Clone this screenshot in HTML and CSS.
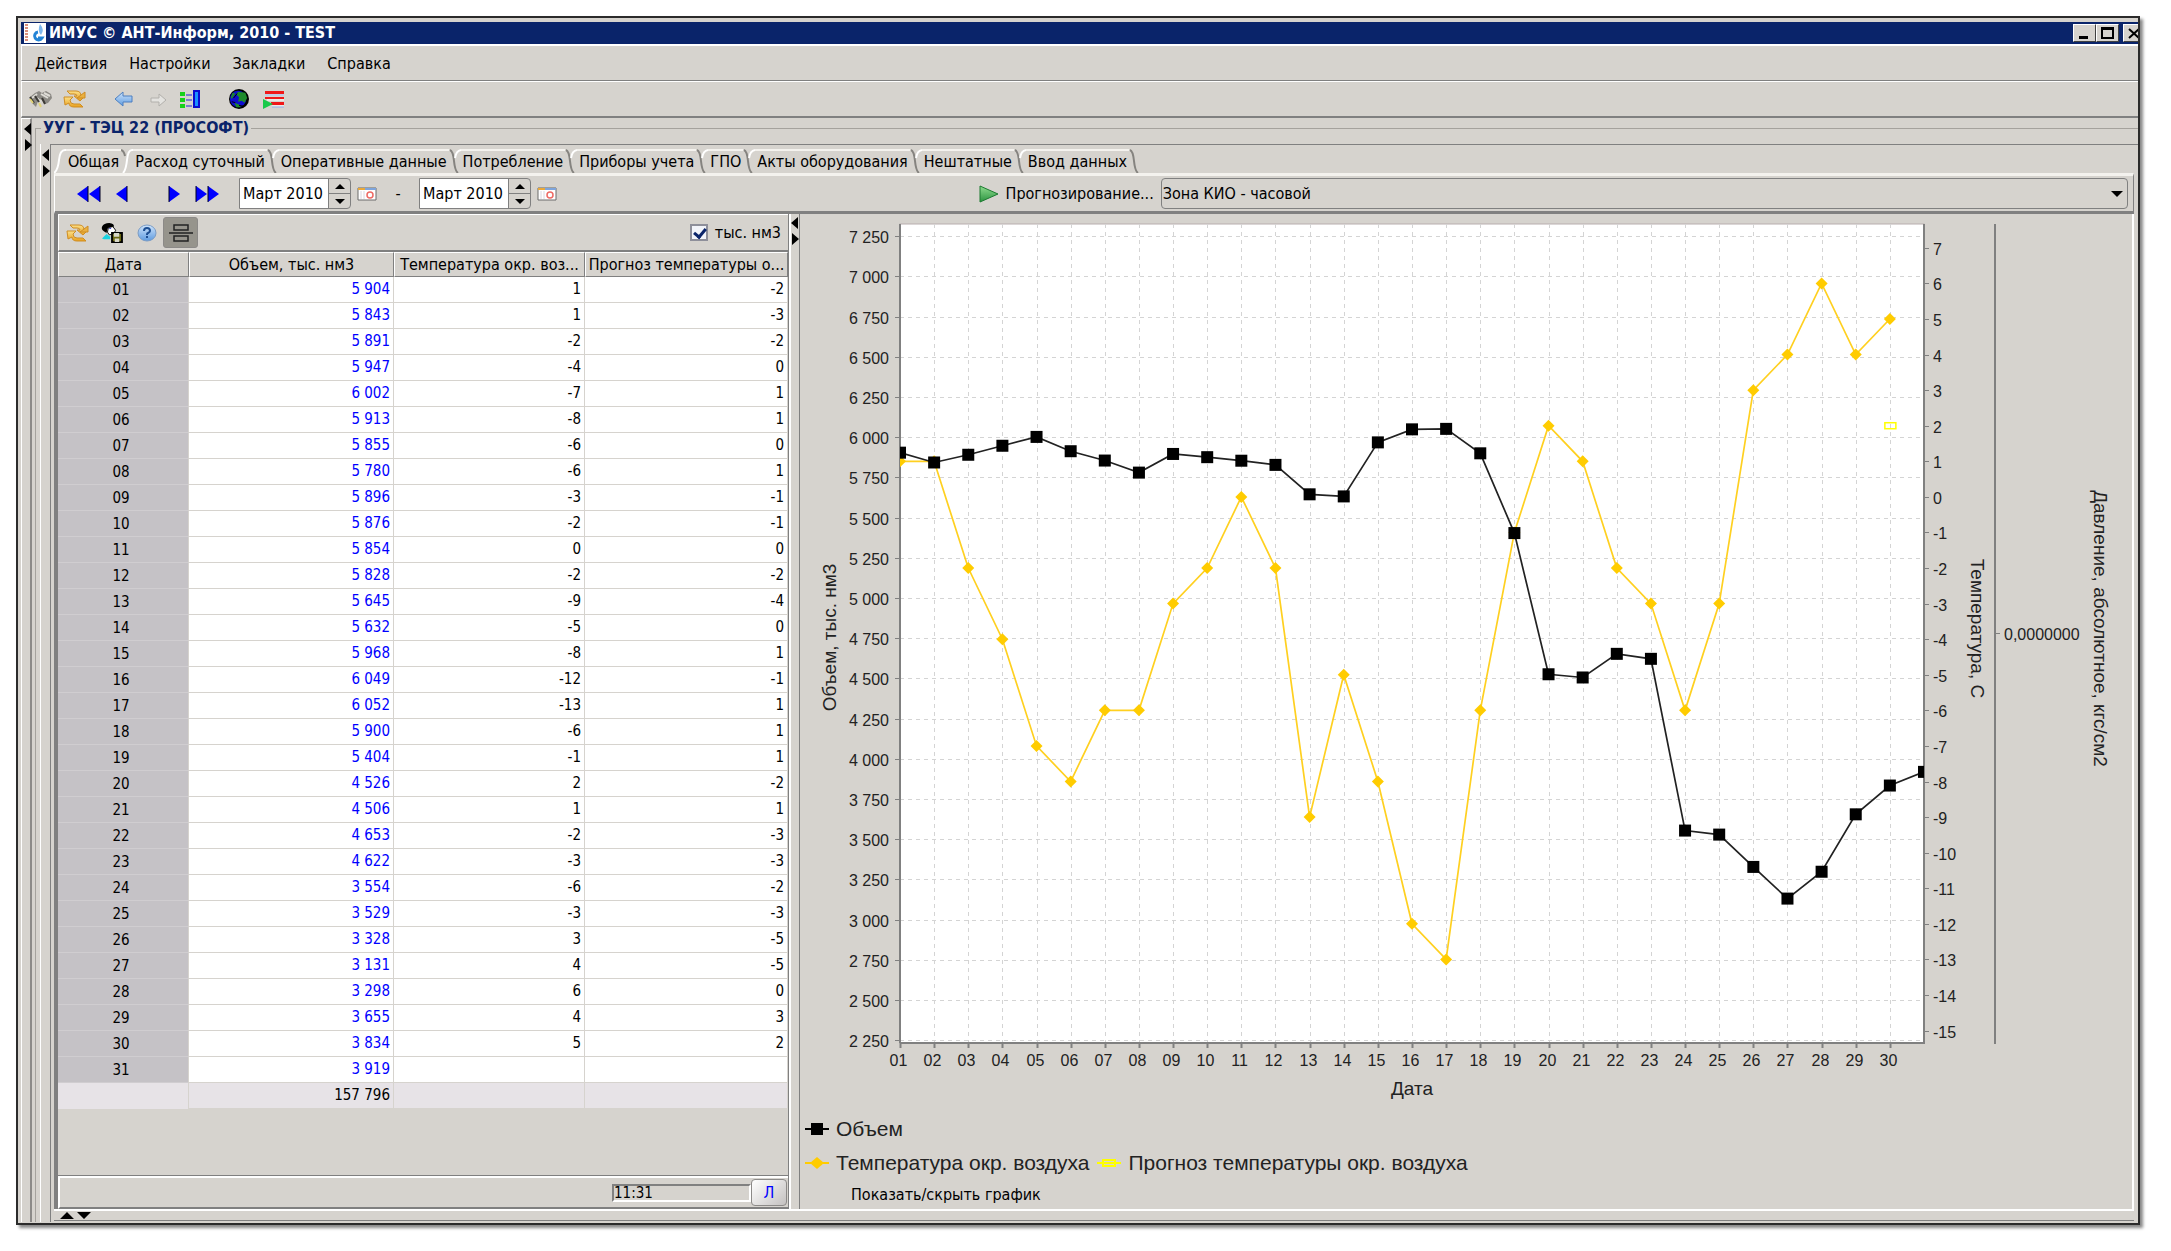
FILE: index.html
```html
<!DOCTYPE html>
<html lang="ru">
<head>
<meta charset="utf-8">
<title>ИМУС © АНТ-Информ, 2010 - TEST</title>
<link rel="stylesheet" href="styles.css">
</head>
<body>
<svg class="defs" width="0" height="0" aria-hidden="true">
  <defs>
    <linearGradient id="gold" x1="0" y1="0" x2="0" y2="1"><stop offset="0" stop-color="#fbe08a"/><stop offset="1" stop-color="#e9a01c"/></linearGradient>
    <linearGradient id="sky" x1="0" y1="0" x2="0" y2="1"><stop offset="0" stop-color="#cfe4fb"/><stop offset="1" stop-color="#5e9be0"/></linearGradient>
    <linearGradient id="leaf" x1="0" y1="0" x2="0" y2="1"><stop offset="0" stop-color="#8fdc8f"/><stop offset="1" stop-color="#2c9440"/></linearGradient>
    <symbol id="i-refresh" viewBox="0 0 24 18">
      <path d="M4 1h9q5 0 5 5h4l-5 5-6-5h3q0-2-3-2H7z" fill="url(#gold)" stroke="#cf8d23"/>
      <path d="M20 17h-9q-5 0-5-4l-4 2-1-8h9l-3 3q0 4 4 4h6z" fill="url(#gold)" stroke="#cf8d23"/>
      <path d="M14 8l8-6v6z" fill="#eab040" stroke="#cf8d23"/>
    </symbol>
    <symbol id="i-calendar" viewBox="0 0 20 14">
      <path d="M1 1h18v12H1z" fill="#fff" stroke="#6b6b6b"/>
      <path d="M1 1h7v2H1z" fill="#e9a93c"/><path d="M8 1h11v2H8z" fill="#7fa5dc"/>
      <path d="M4 4v8M7 4v8" stroke="#d8d8e0"/>
      <circle cx="13" cy="8" r="3" fill="#fff" stroke="#ee6a64" stroke-width="1.5"/>
    </symbol>
  </defs>
</svg>

<div class="window">
  <header class="titlebar">
    <svg class="app-icon" viewBox="0 0 22 20" aria-hidden="true">
      <path d="M0 0h22v20H0z" fill="#fff"/>
      <path d="M1 2h3M1 5h3M1 8h3M1 11h3M1 14h3M1 17h3" fill="none" stroke="#d9907c" stroke-width="2"/>
      <path d="M16 1q5 6 1 11-4-4-1-11z" fill="#7db7ec"/>
      <path d="M14 9a4 4 0 1 0 4 6h-4" fill="none" stroke="#2384d6" stroke-width="3"/>
    </svg>
    <h1 class="title">ИМУС © АНТ-Информ, 2010 - TEST</h1>
    <div class="win-buttons">
      <button class="win-btn" aria-label="Свернуть"><svg viewBox="0 0 20 16"><path d="M5 11h9v3H5z"/></svg></button>
      <button class="win-btn" aria-label="Развернуть"><svg viewBox="0 0 20 16"><path d="M4 2h13v12H4zM6 5v7h9V5z" fill-rule="evenodd"/></svg></button>
      <button class="win-btn close" aria-label="Закрыть"><svg viewBox="0 0 20 16"><path d="M5 4l10 9M15 4L5 13" stroke="#000" stroke-width="2"/></svg></button>
    </div>
  </header>

  <nav class="menubar">
    <button class="menu">Действия</button>
    <button class="menu">Настройки</button>
    <button class="menu">Закладки</button>
    <button class="menu">Справка</button>
  </nav>

  <div class="toolbar">
    <button class="tool" aria-label="Поиск"><svg class="i24" viewBox="0 0 24 20">
      <path d="M1 8l5-4 4-2 3 2 4-2 5 3 1 4-4 5-3 1-4-5-3 2-2 6-4-4z" fill="#8b8984"/>
      <path d="M3 9l5-4M12 5l7 4M8 9l4 4M15 4l6 3" stroke="#dedcd6" stroke-width="2"/>
      <path d="M1 8l4 6M6 7l4 6M13 9l3 6" stroke="#3c3a36" stroke-width="2"/>
      <path d="M10 14l2 4M1 10l3 4" stroke="#e3d478" stroke-width="2"/></svg></button>
    <button class="tool" aria-label="Обновить"><svg class="i24"><use href="#i-refresh"/></svg></button>
    <span class="tool-gap"></span>
    <button class="tool" aria-label="Назад"><svg class="i20" viewBox="0 0 20 18"><path d="M1 9l8-7v4h9v6H9v4z" fill="url(#sky)" stroke="#4c7fc0"/></svg></button>
    <button class="tool forward" aria-label="Вперёд"><svg class="i20" viewBox="0 0 20 18"><path d="M18 10l-7-6v4H3v4h8v4z" fill="#e4e3e0" stroke="#b2b0ac"/></svg></button>
    <button class="tool list" aria-label="Список"><svg class="i20" viewBox="0 0 20 18">
      <path d="M0 2h5v4H0zM0 8h5v4H0zM0 14h5v4H0z" fill="#17d01a"/><path d="M6 5h6M6 10h6M6 16h6" stroke="#2222d8" stroke-width="1"/><path d="M14 1h5v16h-5z" fill="#1a90ff" stroke="#0a0ad0" stroke-width="2"/></svg></button>
    <span class="tool-gap"></span>
    <button class="tool" aria-label="Сеть"><svg class="i24" viewBox="0 0 24 22">
      <ellipse cx="12" cy="11" rx="11" ry="11" fill="#000"/><ellipse cx="11" cy="11" rx="9" ry="9" fill="#0c0ccf"/>
      <path d="M11 3l8 1 2 6-3 5-3-2-4 1 1-5-3-3zM5 4l3 1-4 6-1-2zM7 15l5 2 2 3-5 0z" fill="#1d8a2c"/><path d="M4 14l4 1M12 18l5 1M10 5l-4 5" stroke="#000"/></svg></button>
    <button class="tool rows" aria-label="Выполнить"><svg class="i22" viewBox="0 0 22 18">
      <path d="M2 1h19v3H2zM2 7h19v2H2zM8 12h13v3H8z" fill="#f01818"/><path d="M2 5h19M4 10h17M9 16h12" stroke="#fff"/><path d="M2 5h19M9 17h12" stroke="#8fb0e8"/><path d="M0 9l10 5-10 5z" fill="#18c94a"/></svg></button>
  </div>

  <main class="main">
    <div class="splitter outer"><svg class="split-arrows" viewBox="0 0 8 28"><path d="M7 0v12L0 6zM1 16v12l7-6z"/></svg></div>
    <fieldset class="group">
      <legend>УУГ - ТЭЦ 22 (ПРОСОФТ)</legend>
      <div class="group-body">
        <div class="splitter inner"><svg class="split-arrows" viewBox="0 0 8 28"><path d="M7 0v12L0 6zM1 16v12l7-6z"/></svg></div>
        <div class="sheet">
          <div class="tabs" role="tablist">
            <svg class="edge" viewBox="0 0 12 24"><path d="M0 24q4-3 5-13t6-10h1" fill="none" stroke="#fff" stroke-width="2"/></svg>
            <button class="tab" role="tab">Общая</button>
            <svg class="edge" viewBox="0 0 12 24"><path d="M0 1q3 1 4 6" fill="none" stroke="#85837f" stroke-width="2"/><path d="M2 24q3-3 4-13t5-10h1" fill="none" stroke="#fff" stroke-width="2"/></svg>
            <button class="tab active" role="tab" aria-selected="true">Расход суточный</button>
            <svg class="edge"><use href="#slant"/></svg>
            <button class="tab" role="tab">Оперативные данные</button>
            <svg class="edge"><use href="#slant"/></svg>
            <button class="tab" role="tab">Потребление</button>
            <svg class="edge"><use href="#slant"/></svg>
            <button class="tab" role="tab">Приборы учета</button>
            <svg class="edge"><use href="#slant"/></svg>
            <button class="tab" role="tab">ГПО</button>
            <svg class="edge"><use href="#slant"/></svg>
            <button class="tab" role="tab">Акты оборудования</button>
            <svg class="edge"><use href="#slant"/></svg>
            <button class="tab" role="tab">Нештатные</button>
            <svg class="edge"><use href="#slant"/></svg>
            <button class="tab" role="tab">Ввод данных</button>
            <svg class="edge" viewBox="0 0 12 24"><symbol id="slant" viewBox="0 0 12 24"><path d="M1 1q3 1 4 11t4 12" fill="none" stroke="#85837f" stroke-width="2"/><path d="M6 9q1-7 6-8" fill="none" stroke="#fff" stroke-width="2"/></symbol><path d="M1 1q3 1 4 11t4 12" fill="none" stroke="#85837f" stroke-width="2"/></svg>
          </div>

          <div class="period">
            <div class="period-nav">
              <button class="nav" aria-label="В начало"><svg width="24" height="16" viewBox="0 0 24 16"><path d="M11 0v16L0 8zM23 0v16L12 8z" fill="#00f"/><path d="M11 0v16M23 0v16" stroke="#002" /></svg></button>
              <button class="nav" aria-label="Предыдущий"><svg width="12" height="16" viewBox="0 0 12 16"><path d="M11 0v16L0 8z" fill="#00f"/><path d="M11 0v16" stroke="#002"/></svg></button>
              <button class="nav next" aria-label="Следующий"><svg width="12" height="16" viewBox="0 0 12 16"><path d="M1 0v16l11-8z" fill="#00f"/><path d="M1 0v16" stroke="#002"/></svg></button>
              <button class="nav" aria-label="В конец"><svg width="24" height="16" viewBox="0 0 24 16"><path d="M1 0v16l11-8zM13 0v16l11-8z" fill="#00f"/><path d="M1 0v16M13 0v16" stroke="#002"/></svg></button>
              <div class="spinner from">
                <input type="text" value="Март 2010" aria-label="Начало периода">
                <span class="steps"><button aria-label="Больше"><svg viewBox="0 0 10 5"><path d="M0 5h10L5 0z"/></svg></button><button aria-label="Меньше"><svg viewBox="0 0 10 5"><path d="M0 0h10L5 5z"/></svg></button></span>
              </div>
              <button class="cal" aria-label="Календарь"><svg width="20" height="14"><use href="#i-calendar"/></svg></button>
              <span class="dash">-</span>
              <div class="spinner">
                <input type="text" value="Март 2010" aria-label="Конец периода">
                <span class="steps"><button aria-label="Больше"><svg viewBox="0 0 10 5"><path d="M0 5h10L5 0z"/></svg></button><button aria-label="Меньше"><svg viewBox="0 0 10 5"><path d="M0 0h10L5 5z"/></svg></button></span>
              </div>
              <button class="cal" aria-label="Календарь"><svg width="20" height="14"><use href="#i-calendar"/></svg></button>
            </div>
            <div class="forecast">
              <button class="run"><svg width="20" height="18" viewBox="0 0 20 18"><path d="M1 1v16l18-8z" fill="url(#leaf)" stroke="#1c7a30" stroke-width="1"/></svg>Прогнозирование...</button>
              <div class="combo">
                <select aria-label="Зона"><option>Зона КИО - часовой</option></select>
                <svg class="combo-arrow" viewBox="0 0 12 6"><path d="M0 0h12L6 6z"/></svg>
              </div>
            </div>
          </div>

          <div class="content">
            <section class="data">
              <div class="data-tools">
                <button class="tool" aria-label="Обновить"><svg class="i24"><use href="#i-refresh"/></svg></button>
                <button class="tool" aria-label="Сохранить"><svg class="i24" viewBox="0 0 24 22">
                  <path d="M1 4q2-4 8-4 6 1 5 4l-3 1v2l-4-1-1 5-3-2q-3-2-2-5z" fill="#000"/><path d="M8 5l5-1 3 4-2 4-5 1-2-3z" fill="#fff" stroke="#000"/><path d="M9 6h2" stroke="#22c"/>
                  <path d="M1 17l5-5 4 3v3H3z" fill="#19d3e0"/><path d="M12 11h11v10H12z" fill="#6d6a14" stroke="#000" stroke-width="2"/><path d="M14 11h6v4h-6zM15 17h5v4h-5z" fill="#d8d8c8"/></svg></button>
                <button class="tool help" aria-label="Помощь"><svg class="i20" viewBox="0 0 20 18"><ellipse cx="10" cy="9" rx="9" ry="8" fill="url(#sky)" stroke="#7c9cc4"/><path d="M7 7q0-3 3-3t3 3q0 1-2 2-1 0-1 2M10 12v2" fill="none" stroke="#1d4e92" stroke-width="2"/></svg></button>
                <button class="tool pressed" aria-label="Разделить" aria-pressed="true"><svg width="24" height="18" viewBox="0 0 24 18"><path d="M5 1h14v5H5zM5 12h14v5H5zM0 9h24" fill="none" stroke="#222" stroke-width="1.5"/></svg></button>
                <label class="check"><input type="checkbox" checked>тыс. нм3</label>
              </div>
              <div class="table-wrap">
                <table id="daily">
                  <colgroup><col class="c-date"><col class="c-vol"><col class="c-temp"><col class="c-fore"></colgroup>
                  <thead><tr><th>Дата</th><th>Объем, тыс. нм3</th><th>Температура окр. воз...</th><th>Прогноз температуры о...</th></tr></thead>
                  <tbody>
                    <tr><th>01</th><td>5 904</td><td>1</td><td>-2</td></tr>
                    <tr><th>02</th><td>5 843</td><td>1</td><td>-3</td></tr>
                    <tr><th>03</th><td>5 891</td><td>-2</td><td>-2</td></tr>
                    <tr><th>04</th><td>5 947</td><td>-4</td><td>0</td></tr>
                    <tr><th>05</th><td>6 002</td><td>-7</td><td>1</td></tr>
                    <tr><th>06</th><td>5 913</td><td>-8</td><td>1</td></tr>
                    <tr><th>07</th><td>5 855</td><td>-6</td><td>0</td></tr>
                    <tr><th>08</th><td>5 780</td><td>-6</td><td>1</td></tr>
                    <tr><th>09</th><td>5 896</td><td>-3</td><td>-1</td></tr>
                    <tr><th>10</th><td>5 876</td><td>-2</td><td>-1</td></tr>
                    <tr><th>11</th><td>5 854</td><td>0</td><td>0</td></tr>
                    <tr><th>12</th><td>5 828</td><td>-2</td><td>-2</td></tr>
                    <tr><th>13</th><td>5 645</td><td>-9</td><td>-4</td></tr>
                    <tr><th>14</th><td>5 632</td><td>-5</td><td>0</td></tr>
                    <tr><th>15</th><td>5 968</td><td>-8</td><td>1</td></tr>
                    <tr><th>16</th><td>6 049</td><td>-12</td><td>-1</td></tr>
                    <tr><th>17</th><td>6 052</td><td>-13</td><td>1</td></tr>
                    <tr><th>18</th><td>5 900</td><td>-6</td><td>1</td></tr>
                    <tr><th>19</th><td>5 404</td><td>-1</td><td>1</td></tr>
                    <tr><th>20</th><td>4 526</td><td>2</td><td>-2</td></tr>
                    <tr><th>21</th><td>4 506</td><td>1</td><td>1</td></tr>
                    <tr><th>22</th><td>4 653</td><td>-2</td><td>-3</td></tr>
                    <tr><th>23</th><td>4 622</td><td>-3</td><td>-3</td></tr>
                    <tr><th>24</th><td>3 554</td><td>-6</td><td>-2</td></tr>
                    <tr><th>25</th><td>3 529</td><td>-3</td><td>-3</td></tr>
                    <tr><th>26</th><td>3 328</td><td>3</td><td>-5</td></tr>
                    <tr><th>27</th><td>3 131</td><td>4</td><td>-5</td></tr>
                    <tr><th>28</th><td>3 298</td><td>6</td><td>0</td></tr>
                    <tr><th>29</th><td>3 655</td><td>4</td><td>3</td></tr>
                    <tr><th>30</th><td>3 834</td><td>5</td><td>2</td></tr>
                    <tr><th>31</th><td>3 919</td><td></td><td></td></tr>
                  </tbody>
                  <tfoot><tr><th></th><td>157 796</td><td></td><td></td></tr></tfoot>
                </table>
              </div>
              <div class="statusbar">
                <input class="clock" type="text" value="11:31" aria-label="Время" readonly>
                <button class="mode">Л</button>
              </div>
            </section>

            <div class="splitter mid"><svg class="split-arrows" viewBox="0 0 8 28"><path d="M7 0v12L0 6zM1 16v12l7-6z"/></svg></div>

            <section class="chart-panel">
              <div class="chart-box"><svg id="chart" class="chart" role="img" aria-label="Объем и температура по дням"></svg></div>
              <div class="legend">
                <span class="key"><svg width="24" height="14" viewBox="0 0 24 14"><path d="M0 7h24" stroke="#000" stroke-width="2"/><path d="M6 1h12v12H6z"/></svg>Объем</span>
              </div>
              <div class="legend">
                <span class="key"><svg width="24" height="14" viewBox="0 0 24 14"><path d="M0 7h24" stroke="#fc0" stroke-width="2"/><path d="M12 1l7 6-7 6-7-6z" fill="#fc0"/></svg>Температура окр. воздуха</span>
                <span class="key"><svg width="24" height="14" viewBox="0 0 24 14"><path d="M0 7h24M6 4h12v6H6z" fill="none" stroke="#ff0" stroke-width="2"/></svg>Прогноз температуры окр. воздуха</span>
              </div>
              <button class="toggle">Показать/скрыть график</button>
            </section>
          </div>
          <div class="bottom-split"><svg width="32" height="7" viewBox="0 0 32 7"><path d="M0 7h14L7 0zM17 0h14l-7 7z"/></svg></div>
        </div>
      </div>
    </fieldset>
  </main>
</div>
<script src="chart.js"></script>
</body>
</html>
```
FILE: styles.css
```css
:root {
  --face: #d6d3ce;
  --dark: #808080;
  --line: #8c8a88;
  --light: #fff;
  --ui: "DejaVu Sans Condensed", "DejaVu Sans", sans-serif;
}
* { box-sizing: border-box; }
body {
  margin: 0;
  min-height: 100vh;
  padding: 16px 31px 26px 16px;
  display: flex;
  background: #fff;
  color: #000;
  font: 16px/20px var(--ui);
}
button, input, select { font: inherit; color: inherit; }
button { border: 0; padding: 0; background: none; }
svg { display: block; flex: none; }
.defs { position: absolute; }

.window {
  flex: 1;
  min-width: 0;
  display: flex;
  flex-direction: column;
  padding: 4px 0 1px 3px;
  border: 2px solid #2b2b2b;
  background: var(--face);
  box-shadow: 3px 3px 3px #888;
}

.titlebar {
  display: flex;
  align-items: center;
  height: 22px;
  padding-left: 3px;
  background: #0a246a;
  color: #fff;
  overflow: hidden;
}
.app-icon { width: 22px; height: 20px; }
.title { margin: 0 0 0 3px; font-size: 16px; line-height: 20px; font-weight: bold; }
.win-buttons { display: flex; margin: 0 -8px 0 auto; }
.win-btn {
  width: 23px;
  height: 18px;
  background: var(--face);
  border: 1px solid;
  border-color: #fff #404040 #404040 #fff;
}
.win-btn.close { margin-left: 4px; }
.win-btn svg { width: 20px; height: 16px; }

.menubar {
  display: flex;
  gap: 22px;
  height: 37px;
  padding: 2px 0 0 13px;
  border-top: 2px solid var(--light);
  border-left: 1px solid var(--light);
  border-bottom: 1px solid var(--dark);
}

.toolbar {
  display: flex;
  align-items: center;
  gap: 10px;
  height: 37px;
  padding-left: 7px;
  border-top: 1px solid var(--light);
  border-left: 1px solid var(--light);
  border-bottom: 2px solid var(--dark);
}
.tool-gap { width: 7px; }
.tool { display: flex; align-items: center; justify-content: center; }
.i24 { width: 24px; height: 20px; }
.i22 { width: 22px; height: 20px; }
.i20 { width: 20px; height: 20px; }
.forward { margin-left: 4px; }
.list { margin-left: 2px; }
.rows { margin-left: 2px; }

.main { flex: 1; display: flex; min-width: 0; }
.splitter { flex: none; width: 11px; padding: 4px 1px 0 2px; border-right: 1px solid var(--dark); border-left: 1px solid var(--light); }
.split-arrows { width: 8px; height: 28px; }
.outer { border-right: 2px solid var(--line); border-top: 1px solid var(--light); }
.inner { padding-left: 1px; padding-top: 5px; }
.mid { padding-left: 0; padding-top: 3px; border-left-width: 2px; }

.group {
  flex: 1;
  min-width: 0;
  display: flex;
  flex-direction: column;
  margin: 0 0 0 3px;
  padding: 6px 0 0 4px;
  border: solid #a5a29d;
  border-width: 1px 0 0 1px;
}
.group legend { margin-left: 1px; padding: 0 2px; color: #0a246a; font-weight: bold; }
.group-body { flex: 1; display: flex; min-width: 0; }

.sheet {
  flex: 1;
  min-width: 0;
  display: flex;
  flex-direction: column;
  padding: 4px 4px 0 3px;
  border-top: 1px solid var(--dark);
}
.tabs { display: flex; height: 24px; }
.tab {
  height: 24px;
  padding: 0 2px;
  border-top: 2px solid #f4f2ee;
  white-space: nowrap;
}
.edge { width: 12px; height: 24px; }

.period {
  display: grid;
  grid-template-columns: 4fr 5fr;
  height: 41px;
  border-top: 3px solid #f4f2ee;
  border-left: 1px solid var(--light);
  border-right: 1px solid var(--dark);
  border-bottom: 3px solid var(--dark);
}
.period-nav, .forecast { display: flex; align-items: center; min-width: 0; }
.period-nav { padding-left: 22px; }
.nav + .nav { margin-left: 15px; }
.nav + .nav.next { margin-left: 40px; }
.spinner { display: flex; height: 31px; width: 112px; border: 1px solid var(--dark); border-radius: 0 4px 4px 0; overflow: hidden; }
.from { margin-left: 20px; }
.spinner input { width: 88px; border: 0; padding: 0 3px; background: #fff; outline: 0; }
.steps { flex: 1; display: flex; flex-direction: column; border-left: 1px solid var(--dark); }
.steps button { flex: 1; display: flex; align-items: center; justify-content: center; }
.steps button + button { border-top: 1px solid var(--dark); }
.steps svg { width: 10px; height: 5px; }
.cal { margin-left: 6px; }
.dash { width: 42px; text-align: center; }
.run { display: flex; align-items: center; gap: 7px; flex: none; }
.combo { position: relative; flex: 1; margin: 0 5px 0 7px; }
.combo select {
  appearance: none;
  display: block;
  width: 100%;
  height: 31px;
  padding: 0 1px;
  border: 1px solid var(--dark);
  border-radius: 4px;
  background: var(--face);
}
.combo-arrow { position: absolute; right: 5px; top: 13px; width: 12px; height: 6px; pointer-events: none; }

.content {
  flex: 1;
  display: grid;
  grid-template-columns: 735px 10px 1fr;
  min-height: 0;
  border-right: 2px solid var(--light);
  border-bottom: 2px solid var(--light);
}
.data { display: flex; flex-direction: column; border-left: 4px solid var(--dark); border-right: 1px solid var(--dark); }
.data-tools {
  display: flex;
  align-items: center;
  gap: 10px;
  height: 38px;
  padding: 0 7px;
  border: solid var(--light);
  border-width: 1px 0 0 1px;
  border-bottom: 2px solid var(--dark);
}
.help { margin-left: 3px; }
.pressed { width: 35px; height: 31px; margin-left: -4px; border: 1px solid var(--line); border-radius: 3px; background: #96948c; }
.check { display: flex; align-items: center; gap: 7px; margin-left: auto; }
.check input {
  appearance: none;
  width: 18px;
  height: 17px;
  margin: 0;
  border: 2px solid #8e8f9a;
  background: #f2f4fa;
}
.check input:checked::after { content: ""; display: block; width: 5px; height: 9px; margin: 0 0 0 4px; border: solid #0a246a; border-width: 0 3px 3px 0; transform: rotate(40deg); }

.table-wrap { flex: 1; border-bottom: 1px solid var(--dark); }
#daily { width: 100%; border-collapse: separate; border-spacing: 0; table-layout: fixed; }
.c-date { width: 131px; }
.c-vol { width: 205px; }
.c-temp { width: 191px; }
#daily th, #daily td { height: 26px; padding: 0; font-weight: normal; font-size: 15px; line-height: 20px; white-space: nowrap; }
#daily thead th {
  height: 25px;
  font-size: 16px;
  border: 1px solid;
  border-color: var(--light) var(--dark) var(--dark) var(--light);
}
#daily tbody th { background: #c5c2c6; border-bottom: 1px solid #d0cdd0; border-right: 1px solid var(--face); padding-right: 4px; }
#daily td { padding-right: 3px; padding-bottom: 2px; text-align: right; background: #fff; border: solid var(--face); border-width: 0 1px 1px 0; }
#daily tbody td:nth-child(2) { color: #00f; }
#daily tfoot th, #daily tfoot td { background: #e7e3e7; border-right: 1px solid var(--face); }

.statusbar {
  display: flex;
  align-items: center;
  justify-content: flex-end;
  height: 33px;
  padding-right: 1px;
  border: solid var(--light);
  border-width: 2px 0 0 2px;
  border-bottom: 2px solid var(--dark);
}
.clock {
  width: 139px;
  height: 18px;
  padding: 0;
  border: 2px solid;
  border-color: var(--dark) #fff #fff var(--dark);
  background: var(--face);
  font-size: 15px;
}
.mode { width: 36px; height: 27px; border: 1px solid var(--line); border-radius: 4px; background: linear-gradient(135deg, #fff, #c4c1c0); color: #00f; }

.chart-panel { display: flex; flex-direction: column; min-width: 0; }
.chart-box { flex: 1; min-height: 500px; display: flex; }
.chart { flex: 1; width: 100%; min-width: 0; fill: #222; font: 16px "Liberation Sans", Arial, sans-serif; }
.chart .caption { font-size: 19px; }
.legend { display: flex; gap: 8px; height: 34px; align-items: center; padding-left: 6px; color: #222; font: 21px/24px "Liberation Sans", Arial, sans-serif; }
.key { display: flex; align-items: center; gap: 7px; }
.toggle { align-self: flex-start; height: 29px; margin-left: 52px; }

.bottom-split { height: 10px; padding: 1px 0 0 6px; border-bottom: 1px solid var(--dark); margin-bottom: 1px; }
```
FILE: chart.js
```js
(function () {
  var svg = document.getElementById('chart');
  var rows = Array.prototype.map.call(document.querySelectorAll('#daily tbody tr'), function (tr) {
    return Array.prototype.map.call(tr.children, function (cell) {
      return cell.textContent.replace(/\s/g, '');
    });
  });

  function group(n) { return String(n).replace(/(\d)(\d{3})$/, '$1 $2'); }

  function draw() {
    var w = svg.clientWidth, h = svg.clientHeight;
    var left = 101, right = w - 208, top = 10, bottom = h - 69;
    var mid = (top + bottom) / 2;
    var out = '';

    function x(day) { return left + (right - left) * (day - 1) / 30; }
    function volume(v) { return bottom - (bottom - top) * (v - 2233) / 5093; }
    function temp(t) { return bottom - (bottom - top) * (t + 15.35) / 23.02; }
    function line(x1, y1, x2, y2, extra) {
      out += '<line x1="' + x1 + '" y1="' + y1 + '" x2="' + x2 + '" y2="' + y2 + '" ' + extra + '/>';
    }
    function text(tx, ty, anchor, value, extra) {
      out += '<text x="' + tx + '" y="' + ty + '" text-anchor="' + anchor + '" ' + (extra || '') + '>' + value + '</text>';
    }
    var grid = 'stroke="#d4d4d4" stroke-dasharray="4 4"';
    var axis = 'stroke="#808080" stroke-width="2"';
    var i, y;

    out += '<clipPath id="plot"><rect x="' + left + '" y="' + top + '" width="' + (right - left) + '" height="' + (bottom - top) + '"/></clipPath>';
    out += '<rect x="' + left + '" y="' + top + '" width="' + (right - left) + '" height="' + (bottom - top) + '" fill="#fff" stroke="#b8aeae"/>';

    for (i = 2250; i <= 7250; i += 250) {
      y = Math.round(volume(i)) + 0.5;
      line(left, y, right, y, grid);
      line(left - 5, y, left, y, 'stroke="#808080"');
      text(left - 11, y + 6, 'end', group(i));
    }
    for (i = 1; i <= 30; i++) {
      var gx = Math.round(x(i)) + 0.5;
      if (i > 1) line(gx, top, gx, bottom, grid);
      line(gx, bottom, gx, bottom + 5, axis);
      text(gx - 2, bottom + 23, 'middle', (i < 10 ? '0' : '') + i);
    }
    for (i = -15; i <= 7; i++) {
      y = Math.round(temp(i)) + 0.5;
      line(right, y, right + 5, y, 'stroke="#808080"');
      text(right + 9, y + 6, 'start', i);
    }
    line(left, top, left, bottom, axis);
    line(right, top, right, bottom + 1, axis);
    line(left, bottom, right, bottom, axis);
    line(right + 71, top, right + 71, bottom + 1, axis);
    line(right + 71, mid, right + 76, mid, 'stroke="#808080"');
    text(right + 80, mid + 6, 'start', '0,0000000');

    function series(index, scale, colour, marker) {
      var points = rows.filter(function (r) { return r[index] !== ''; }).map(function (r) {
        return [x(+r[0]), scale(+r[index])];
      });
      out += '<polyline points="' + points.join(' ') + '" fill="none" stroke="' + colour + '" stroke-width="1.7"/>';
      points.forEach(function (p) { out += marker(p[0], p[1]); });
    }
    out += '<g clip-path="url(#plot)">';
    series(2, temp, '#ffd020', function (px, py) {
      return '<path d="M' + px + ' ' + (py - 6) + 'l6 6-6 6-6-6z" fill="#fc0"/>';
    });
    series(1, volume, '#222', function (px, py) {
      return '<rect x="' + (px - 6) + '" y="' + (py - 6) + '" width="12" height="12" fill="#000"/>';
    });
    var last = rows[29];
    out += '<rect x="' + (x(30) - 5) + '" y="' + (temp(+last[3]) - 3) + '" width="11" height="6" fill="none" stroke="#ff0" stroke-width="1.5"/>';
    out += '</g>';

    function vertical(cx, cy, angle, value) {
      text(0, 7, 'middle', value, 'class="caption" transform="translate(' + cx + ' ' + cy + ') rotate(' + angle + ')"');
    }
    vertical(30, mid + 4, -90, 'Объем, тыс. нм3');
    vertical(right + 54, mid - 5, 90, 'Температура, С');
    vertical(right + 177, mid - 5, 90, 'Давление, абсолютное, кгс/см2');
    text((left + right) / 2, bottom + 52, 'middle', 'Дата', 'class="caption"');
    svg.innerHTML = out;
  }

  draw();
  window.addEventListener('resize', draw);
})();
```
